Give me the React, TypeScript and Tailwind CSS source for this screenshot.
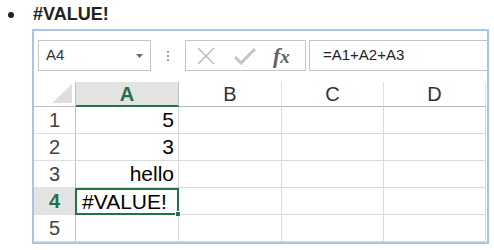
const FONT = { fontFamily: '"Liberation Sans", Arial, sans-serif' };

const COLS = ["A", "B", "C", "D"];
const ROWS: { n: number; a: string; sel?: boolean }[] = [
  { n: 1, a: "5" },
  { n: 2, a: "3" },
  { n: 3, a: "hello" },
  { n: 4, a: "#VALUE!", sel: true },
  { n: 5, a: "" },
];

function Toolbar() {
  return (
    <div className="flex h-[51px] items-start pl-[4px] pt-[9px]">
      {/* Name box */}
      <div className="flex h-[31px] w-[113px] items-center justify-between border border-[#c6c6c6] pl-[7px] pr-[7px]">
        <span className="text-[15px] text-[#333]">A4</span>
        <svg width="7" height="4" viewBox="0 0 7 4">
          <path d="M0 0 L7 0 L3.5 4 Z" fill="#6b6b6b" />
        </svg>
      </div>
      {/* dots */}
      <div className="flex h-[31px] w-[34px] flex-col items-center justify-center gap-[2px]">
        <span className="h-[2px] w-[2px] bg-[#a0a0a0]" />
        <span className="h-[2px] w-[2px] bg-[#a0a0a0]" />
        <span className="h-[2px] w-[2px] bg-[#a0a0a0]" />
      </div>
      {/* cancel / enter / fx */}
      <div className="flex h-[31px] w-[121px] items-center border border-[#c6c6c6]">
        <svg width="20" height="18" viewBox="0 0 20 18" className="ml-[10px]">
          <path d="M2 1 L18 17 M18 1 L2 17" stroke="#bdbdbd" strokeWidth="1.6" />
        </svg>
        <svg width="22" height="18" viewBox="0 0 22 18" className="ml-[18px]">
          <path d="M1 10 L7 16 L21 2" stroke="#c4c4c4" strokeWidth="3" fill="none" />
        </svg>
        <span
          className="ml-[17px] text-[22px] font-bold italic leading-none text-[#606060]"
          style={{ fontFamily: '"Liberation Serif", "Times New Roman", serif' }}
        >
          f<span className="text-[19px]">x</span>
        </span>
      </div>
      {/* formula */}
      <div className="ml-[3px] flex h-[31px] flex-1 items-center border-y border-l border-[#c6c6c6] pl-[13px]">
        <span className="text-[15px] text-[#222]">=A1+A2+A3</span>
      </div>
    </div>
  );
}

function Grid() {
  return (
    <div className="grid grid-cols-[42px_103px_103px_102px_102px]">
      {/* header row */}
      <div className="relative h-[25px] border-b border-r border-[#c0c0c0] bg-white">
        <svg width="20" height="19" viewBox="0 0 20 19" className="absolute bottom-[3px] right-[3px]">
          <path d="M20 0 L20 19 L0 19 Z" fill="#dedede" />
        </svg>
      </div>
      {COLS.map((c) => (
        <div
          key={c}
          className={
            c === "A"
              ? "flex h-[25px] items-center justify-center border-b-2 border-r border-b-[#217346] border-r-[#c0c0c0] bg-[#e3e3e3] text-[20px] font-bold text-[#217346]"
              : "flex h-[25px] items-center justify-center border-b border-r border-b-[#b8b8b8] border-r-[#e0e0e0] text-[20px] text-[#333]"
          }
        >
          {c}
        </div>
      ))}
      {ROWS.map((r) => (
        <Row key={r.n} {...r} />
      ))}
    </div>
  );
}

function Row({ n, a, sel }: { n: number; a: string; sel?: boolean }) {
  const h = "h-[27px]";
  return (
    <>
      <div
        className={
          (sel
            ? "bg-[#e3e3e3] font-bold text-[#217346] "
            : "bg-white text-[#444] ") +
          h +
          " flex items-center justify-center border-b border-r border-b-[#e0e0e0] border-r-[#c0c0c0] text-[20px]"
        }
      >
        {n}
      </div>
      {sel ? (
        <div className={"relative -ml-px flex items-center border-2 border-[#217346] pl-[5px] text-[21px] text-black " + h}>
          {a}
          <span className="absolute -bottom-[4px] -right-[4px] h-[6px] w-[6px] border border-white bg-[#217346]" />
        </div>
      ) : (
        <div className={"flex items-center justify-end border-b border-r border-[#d9d9d9] pr-[4px] text-[21px] text-black " + h}>
          {a}
        </div>
      )}
      {["B", "C", "D"].map((c) => (
        <div key={c} className={"border-b border-r border-[#d9d9d9] " + h} />
      ))}
    </>
  );
}

export default function App() {
  return (
    <div className="h-[250px] w-[494px] overflow-hidden bg-white" style={FONT}>
      <div className="flex h-[29px] items-center">
        <span className="ml-[8px] h-[6px] w-[6px] rounded-full bg-[#222]" />
        <span className="ml-[19px] text-[18px] font-bold text-[#222]">#VALUE!</span>
      </div>
      <div className="ml-[32px] w-[457px] border-2 border-[#a7c6e6]">
        <Toolbar />
        <Grid />
      </div>
    </div>
  );
}
